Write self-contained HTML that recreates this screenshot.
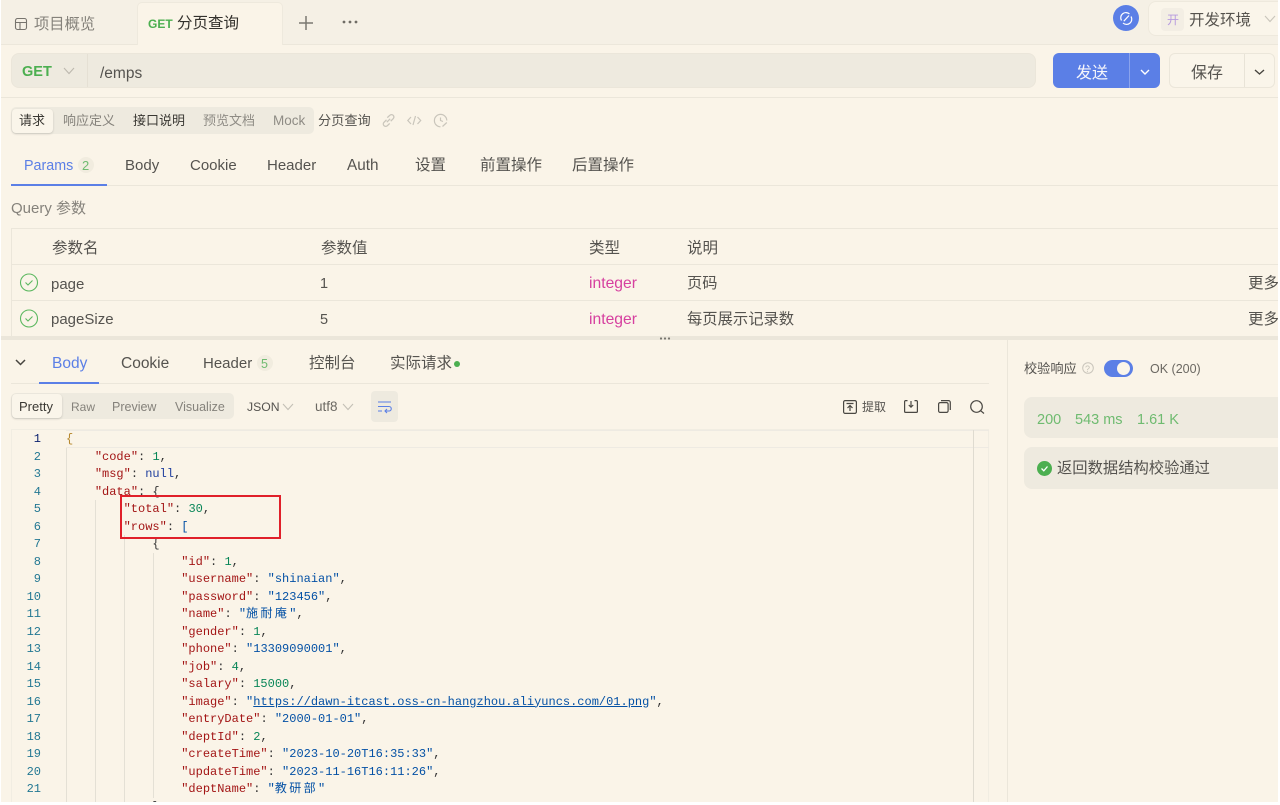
<!DOCTYPE html>
<html lang="zh"><head><meta charset="utf-8"><title>分页查询</title>
<style>
html,body{margin:0;padding:0;width:1280px;height:805px;overflow:hidden;background:#faf4e8}
body{position:relative;font-family:"Liberation Sans","Noto Sans CJK SC",sans-serif;color:#55534f;font-size:14px}
.a{position:absolute}
.t{position:absolute;white-space:nowrap;line-height:20px;height:20px}
.b{position:absolute;background:#ebe6da}
svg{position:absolute;overflow:visible;fill:none}
#code{position:absolute;left:66px;top:431px;font:12px/17.5px "Liberation Mono","Noto Sans CJK SC",monospace;color:#333;white-space:pre;letter-spacing:0}
#nums{position:absolute;left:12px;width:29px;top:431px;font:12px/17.5px "Liberation Mono",monospace;color:#237893;text-align:right;white-space:pre}
.k{color:#a31515}.s{color:#0451a5}.n{color:#098658}.p{color:#333}.c{letter-spacing:2.4px}
</style></head><body>
<!-- tab bar -->
<div class="a" style="left:0;top:0;width:1280px;height:44px;background:#f5f0e5;border-bottom:1px solid #ece7db"></div>
<svg style="left:15px;top:18px" width="13" height="13" stroke="#77746e" stroke-width="1.1"><rect x=".5" y=".5" width="11" height="11" rx="2"/><path d="M.5 4.5H11.5M5 4.5V11.5"/></svg>
<span class="t" style="left:34px;top:15px;font-size:15.3px;color:#85827b">项目概览</span>
<div class="a" style="left:137px;top:2px;width:146px;height:43px;background:#faf4e8;border:1px solid #eee9dd;border-bottom:0;border-radius:5px 5px 0 0;box-sizing:border-box"></div>
<span class="t" style="left:148px;top:14px;font-size:12px;font-weight:700;color:#4caf50">GET</span>
<span class="t" style="left:177px;top:14px;font-size:15.5px;color:#33312d">分页查询</span>
<svg style="left:299px;top:16px" width="15" height="15" stroke="#7b7871" stroke-width="1.5"><path d="M7 0V14M0 7H14"/></svg>
<svg style="left:342px;top:20px" width="16" height="5"><circle cx="2" cy="2" r="1.4" fill="#6f6c65"/><circle cx="8" cy="2" r="1.4" fill="#6f6c65"/><circle cx="14" cy="2" r="1.4" fill="#6f6c65"/></svg>
<div class="a" style="left:1113px;top:5px;width:26px;height:26px;border-radius:50%;background:#5b7fe6"></div>
<svg style="left:1120px;top:12px" width="13" height="13" stroke="#fff" stroke-width="1.2"><path d="M1.500 8.500A5.200 5.200 0 0 1 9.500 2M11 4.500A5.200 5.200 0 0 1 3 11M3.800 9.200L9 3.500"/></svg>
<div class="a" style="left:1148px;top:1px;width:140px;height:35px;border:1px solid #eee9dd;border-radius:8px;background:#faf5ea;box-sizing:border-box"></div>
<div class="a" style="left:1161px;top:8px;width:23px;height:23px;border-radius:4px;background:#f3eee4"></div>
<span class="t" style="left:1167px;top:10px;font-size:12px;color:#b79bdf">开</span>
<span class="t" style="left:1189px;top:11px;font-size:15.5px;color:#56534e">开发环境</span>
<svg style="left:1264px;top:15px" width="12" height="8" stroke="#c9c5bb" stroke-width="1.1"><path d="M1 1L6 6.5L11 1"/></svg>
<!-- url bar -->
<div class="a" style="left:11px;top:53px;width:1025px;height:35px;background:#eeeadf;border-radius:8px;border:1px solid #ebe6da;box-sizing:border-box"></div>
<div class="a" style="left:87px;top:54px;width:1px;height:33px;background:#e5e0d4"></div>
<span class="t" style="left:22px;top:62px;font-size:14.5px;font-weight:700;color:#4caf50">GET</span>
<svg style="left:63px;top:67px" width="12" height="8" stroke="#bdb9af" stroke-width="1.1"><path d="M1 1L6 6.5L11 1"/></svg>
<span class="t" style="left:100px;top:64px;font-size:15.5px;color:#55534f">/emps</span>
<div class="a" style="left:1053px;top:53px;width:107px;height:35px;background:#5b7fe6;border-radius:6px"></div>
<div class="a" style="left:1129px;top:53px;width:1px;height:35px;background:#8aa3ed"></div>
<span class="t" style="left:1076px;top:64px;font-size:16px;color:#f5f6fb">发送</span>
<svg style="left:1140px;top:69px" width="10" height="6" stroke="#fff" stroke-width="1.4"><path d="M1 1L5 5L9 1"/></svg>
<div class="a" style="left:1169px;top:53px;width:106px;height:35px;border:1px solid #ebe6da;border-radius:6px;box-sizing:border-box;background:#faf5ea"></div>
<div class="a" style="left:1244px;top:54px;width:1px;height:33px;background:#e8e3d7"></div>
<span class="t" style="left:1191px;top:64px;font-size:16px;color:#55534f">保存</span>
<svg style="left:1254px;top:69px" width="11" height="6" stroke="#47453f" stroke-width="1.4"><path d="M1 1L5.500 5L10 1"/></svg>
<div class="b" style="left:0;top:97px;width:1280px;height:1px"></div>
<!-- segmented -->
<div class="a" style="left:11px;top:107px;width:303px;height:27px;background:#eeeadf;border-radius:5px"></div>
<div class="a" style="left:12px;top:109px;width:41px;height:24px;background:#faf5ea;border-radius:4px;box-shadow:0 1px 2px rgba(0,0,0,.16)"></div>
<span class="t" style="left:19px;top:111px;font-size:13px;color:#3a3833">请求</span>
<span class="t" style="left:63px;top:111px;font-size:13px;color:#85827b">响应定义</span>
<span class="t" style="left:133px;top:111px;font-size:13px;color:#3a3833">接口说明</span>
<span class="t" style="left:203px;top:111px;font-size:13px;color:#8f8c85">预览文档</span>
<span class="t" style="left:273px;top:111px;font-size:13.5px;color:#8f8c85">Mock</span>
<span class="t" style="left:318px;top:111px;font-size:13.2px;color:#55534f">分页查询</span>
<svg style="left:382px;top:114px" width="13" height="13" stroke="#c9c5bb" stroke-width="1.300"><path d="M4.800 8.200L8.200 4.800M4.500 5.800L2 8.300a2.400 2.400 0 0 0 3.400 3.400L7.700 9.400M5.300 3.600L7.800 1.300a2.400 2.400 0 0 1 3.400 3.400L8.700 7.200"/></svg>
<svg style="left:407px;top:115px" width="15" height="11" stroke="#c9c5bb" stroke-width="1.200"><path d="M4 2L.8 5.500L4 9M10.500 2L13.700 5.500L10.500 9M8.500 1L6 10"/></svg>
<svg style="left:434px;top:114px" width="14" height="14" stroke="#c9c5bb" stroke-width="1.200"><path d="M12.800 6.500A6.200 6.200 0 1 0 6.500 12.800M6.500 3.500V6.500L9 7.500M8.500 12.500L12.800 8.500"/></svg>
<!-- tabs -->
<span class="t" style="left:24px;top:156px;font-size:14.300px;color:#5b7fe6">Params</span>
<div class="a" style="left:78px;top:157px;width:16px;height:16px;border-radius:50%;background:#f1ecdf"></div>
<span class="t" style="left:82px;top:156px;font-size:13px;color:#6fbb70">2</span>
<span class="t" style="left:125px;top:156px;font-size:15px;color:#55534f">Body</span>
<span class="t" style="left:190px;top:156px;font-size:15px;color:#55534f">Cookie</span>
<span class="t" style="left:267px;top:156px;font-size:15px;color:#55534f">Header</span>
<span class="t" style="left:347px;top:156px;font-size:15.3px;color:#55534f">Auth</span>
<span class="t" style="left:415px;top:156px;font-size:15.5px;color:#55534f">设置</span>
<span class="t" style="left:480px;top:156px;font-size:15.5px;color:#55534f">前置操作</span>
<span class="t" style="left:572px;top:156px;font-size:15.5px;color:#55534f">后置操作</span>
<div class="b" style="left:11px;top:185px;width:1269px;height:1px"></div>
<div class="a" style="left:11px;top:184px;width:96px;height:2px;background:#5b7fe6"></div>
<span class="t" style="left:11px;top:199px;font-size:15px;color:#85827b">Query 参数</span>
<!-- table -->
<div class="b" style="left:11px;top:228px;width:1269px;height:1px"></div>
<div class="b" style="left:11px;top:264px;width:1269px;height:1px"></div>
<div class="b" style="left:11px;top:300px;width:1269px;height:1px"></div>
<div class="b" style="left:11px;top:228px;width:1px;height:110px"></div>
<span class="t" style="left:52px;top:239px;font-size:15.5px;color:#55534f">参数名</span>
<span class="t" style="left:321px;top:239px;font-size:15.5px;color:#55534f">参数值</span>
<span class="t" style="left:589px;top:239px;font-size:15.5px;color:#55534f">类型</span>
<span class="t" style="left:687px;top:239px;font-size:15.5px;color:#55534f">说明</span>
<svg style="left:20px;top:274px" width="18" height="18" stroke="#5cb860" stroke-width="1.1"><circle cx="9" cy="8.500" r="8.500"/><path d="M5.500 8.500L8 11L12.500 6.500"/></svg>
<span class="t" style="left:51px;top:275px;font-size:15px">page</span>
<span class="t" style="left:320px;top:274px;font-size:14.500px">1</span>
<span class="t" style="left:589px;top:274px;font-size:15.7px;color:#d6409f">integer</span>
<span class="t" style="left:687px;top:274px;font-size:15.200px">页码</span>
<span class="t" style="left:1248px;top:274px;font-size:15.500px">更多</span>
<svg style="left:20px;top:310px" width="18" height="18" stroke="#5cb860" stroke-width="1.1"><circle cx="9" cy="8.500" r="8.500"/><path d="M5.500 8.500L8 11L12.500 6.500"/></svg>
<span class="t" style="left:51px;top:310px;font-size:15px">pageSize</span>
<span class="t" style="left:320px;top:310px;font-size:14.500px">5</span>
<span class="t" style="left:589px;top:310px;font-size:15.7px;color:#d6409f">integer</span>
<span class="t" style="left:687px;top:310px;font-size:15.300px">每页展示记录数</span>
<span class="t" style="left:1248px;top:310px;font-size:15.500px">更多</span>
<!-- splitter -->
<div class="a" style="left:0;top:336px;width:1280px;height:4px;background:#ebe6da"></div>
<svg style="left:659px;top:336px" width="13" height="5"><circle cx="2" cy="2.500" r="1.100" fill="#77746e"/><circle cx="6" cy="2.500" r="1.100" fill="#77746e"/><circle cx="10" cy="2.500" r="1.100" fill="#77746e"/></svg>
<!-- response tabs -->
<svg style="left:15px;top:359px" width="11" height="7" stroke="#47453f" stroke-width="1.5"><path d="M1 1L5.500 5.500L10 1"/></svg>
<span class="t" style="left:52px;top:354px;font-size:15.500px;color:#5b7fe6">Body</span>
<span class="t" style="left:121px;top:354px;font-size:15.500px">Cookie</span>
<span class="t" style="left:203px;top:354px;font-size:15px">Header</span>
<div class="a" style="left:257px;top:355px;width:16px;height:16px;border-radius:50%;background:#f1ecdf"></div>
<span class="t" style="left:261px;top:354px;font-size:12.500px;color:#6fbb70">5</span>
<span class="t" style="left:309px;top:354px;font-size:15.500px">控制台</span>
<span class="t" style="left:390px;top:354px;font-size:15.500px">实际请求</span>
<div class="a" style="left:454px;top:361px;width:6px;height:6px;border-radius:50%;background:#4caf50"></div>
<div class="b" style="left:11px;top:383px;width:978px;height:1px"></div>
<div class="a" style="left:39px;top:382px;width:60px;height:2px;background:#5b7fe6"></div>
<!-- pretty -->
<div class="a" style="left:11px;top:393px;width:223px;height:26px;background:#eeeadf;border-radius:5px"></div>
<div class="a" style="left:12px;top:394px;width:50px;height:24px;background:#faf5ea;border-radius:4px;box-shadow:0 1px 2px rgba(0,0,0,.16)"></div>
<span class="t" style="left:19px;top:397px;font-size:13px;color:#3a3833">Pretty</span>
<span class="t" style="left:71px;top:397px;font-size:12px;color:#85827b">Raw</span>
<span class="t" style="left:112px;top:397px;font-size:12.500px;color:#85827b">Preview</span>
<span class="t" style="left:175px;top:397px;font-size:12.500px;color:#85827b">Visualize</span>
<span class="t" style="left:247px;top:397px;font-size:12.200px">JSON</span>
<svg style="left:282px;top:403px" width="12" height="8" stroke="#c4c0b6" stroke-width="1.100"><path d="M1 1L6 6.500L11 1"/></svg>
<span class="t" style="left:315px;top:397px;font-size:13.500px;color:#6b6862">utf8</span>
<svg style="left:342px;top:403px" width="12" height="8" stroke="#c4c0b6" stroke-width="1.100"><path d="M1 1L6 6.500L11 1"/></svg>
<div class="a" style="left:371px;top:391px;width:27px;height:31px;background:#eeeadf;border-radius:4px"></div>
<svg style="left:378px;top:401px" width="14" height="12" stroke="#5b7fe6" stroke-width="1.100"><path d="M0 1H13M0 5.500H11a2.200 2.200 0 0 1 0 4.500H7M9 8L7 10L9 12M0 10H4"/></svg>
<svg style="left:843px;top:400px" width="14" height="14" stroke="#4a4843" stroke-width="1.200"><rect x=".6" y=".6" width="12.800" height="12.800" rx="1.500"/><path d="M3.500 3.500H10.500M7 11V5.500M4.500 8L7 5.500L9.500 8"/></svg>
<span class="t" style="left:862px;top:397px;font-size:12px;color:#55534f">提取</span>
<svg style="left:904px;top:400px" width="14" height="13" stroke="#4a4843" stroke-width="1.200"><path d="M3.500 .6H1.600a1 1 0 0 0-1 1V11.400a1 1 0 0 0 1 1H12.400a1 1 0 0 0 1-1V1.600a1 1 0 0 0-1-1H10.500M7 1V7M4.800 5L7 7.200L9.200 5"/></svg>
<svg style="left:938px;top:400px" width="13" height="13" stroke="#4a4843" stroke-width="1.200"><rect x=".6" y="2.600" width="9.500" height="9.800" rx="1.500"/><path d="M3 .6H10.500a1.800 1.800 0 0 1 1.800 1.800V10"/></svg>
<svg style="left:970px;top:400px" width="15" height="14" stroke="#4a4843" stroke-width="1.200"><circle cx="6.500" cy="6.500" r="5.800"/><path d="M10.800 10.800L14 13.500"/></svg>
<!-- right panel -->
<div class="b" style="left:1007px;top:340px;width:1px;height:465px"></div>
<span class="t" style="left:1024px;top:359px;font-size:13.200px">校验响应</span>
<svg style="left:1082px;top:362px" width="12" height="12" stroke="#c9c5bb"><circle cx="6" cy="6" r="5.300"/></svg>
<span class="t" style="left:1085px;top:359px;font-size:9px;color:#c4c0b6">?</span>
<div class="a" style="left:1104px;top:360px;width:29px;height:17px;border-radius:9px;background:#5b7fe6"></div>
<div class="a" style="left:1117px;top:362px;width:13px;height:13px;border-radius:50%;background:#faf5ea"></div>
<span class="t" style="left:1150px;top:359px;font-size:12.500px;color:#6b6862">OK (200)</span>
<div class="a" style="left:1024px;top:397px;width:256px;height:41px;background:#eeeadf;border-radius:8px 0 0 8px"></div>
<span class="t" style="left:1037px;top:410px;font-size:14.500px;color:#6fbb70">200</span>
<span class="t" style="left:1075px;top:410px;font-size:14.500px;color:#6fbb70">543 ms</span>
<span class="t" style="left:1137px;top:410px;font-size:14.500px;color:#6fbb70">1.61 K</span>
<div class="a" style="left:1024px;top:447px;width:256px;height:42px;background:#eeeadf;border-radius:8px 0 0 8px"></div>
<div class="a" style="left:1037px;top:461px;width:15px;height:15px;border-radius:50%;background:#4caf50"></div>
<svg style="left:1037px;top:461px" width="15" height="15" stroke="#fff" stroke-width="1.300"><path d="M4.500 7.500L6.800 9.800L10.500 5.500"/></svg>
<span class="t" style="left:1057px;top:459px;font-size:15.300px;color:#55534f">返回数据结构校验通过</span>
<!-- editor -->
<div class="a" style="left:11px;top:429px;width:978px;height:376px;border:1px solid #f1ede2;border-bottom:0;box-sizing:border-box"></div>
<div class="a" style="left:66px;top:430px;width:923px;height:18px;border-top:1px solid #eeeae2;border-bottom:1px solid #eeeae2;box-sizing:border-box"></div>
<div class="a" style="left:973px;top:430px;width:1px;height:375px;background:#dfdbd0"></div>
<div class="a" style="left:66px;top:448px;width:1px;height:357px;background:#e4e0d5"></div>
<div class="a" style="left:95px;top:500px;width:1px;height:305px;background:#e4e0d5"></div>
<div class="a" style="left:124px;top:535px;width:1px;height:270px;background:#e4e0d5"></div>
<div class="a" style="left:153px;top:553px;width:1px;height:245px;background:#e4e0d5"></div>
<div id="nums"><span style="color:#0b216f">1</span>
2
3
4
5
6
7
8
9
10
11
12
13
14
15
16
17
18
19
20
21
22</div>
<div id="code"><span style="color:#b5862b">{</span>
    <span class="k">"code"</span>: <span class="n">1</span>,
    <span class="k">"msg"</span>: <span style="color:#1f3f9e">null</span>,
    <span class="k">"data"</span>: {
        <span class="k">"total"</span>: <span class="n">30</span>,
        <span class="k">"rows"</span>: <span class="s">[</span>
            {
                <span class="k">"id"</span>: <span class="n">1</span>,
                <span class="k">"username"</span>: <span class="s">"shinaian"</span>,
                <span class="k">"password"</span>: <span class="s">"123456"</span>,
                <span class="k">"name"</span>: <span class="s">"<span class="c">施耐庵</span>"</span>,
                <span class="k">"gender"</span>: <span class="n">1</span>,
                <span class="k">"phone"</span>: <span class="s">"13309090001"</span>,
                <span class="k">"job"</span>: <span class="n">4</span>,
                <span class="k">"salary"</span>: <span class="n">15000</span>,
                <span class="k">"image"</span>: <span class="s">"<u>https://dawn-itcast.oss-cn-hangzhou.aliyuncs.com/01.png</u>"</span>,
                <span class="k">"entryDate"</span>: <span class="s">"2000-01-01"</span>,
                <span class="k">"deptId"</span>: <span class="n">2</span>,
                <span class="k">"createTime"</span>: <span class="s">"2023-10-20T16:35:33"</span>,
                <span class="k">"updateTime"</span>: <span class="s">"2023-11-16T16:11:26"</span>,
                <span class="k">"deptName"</span>: <span class="s">"<span class="c">教研部</span>"</span>
            },</div>
<div class="a" style="left:120px;top:495px;width:161px;height:44px;border:2px solid #e0202a;box-sizing:border-box"></div>
<div class="a" style="left:0;top:802px;width:1280px;height:3px;background:#fff"></div>
<div class="a" style="left:0;top:0;width:1px;height:805px;background:#fff"></div>
<div class="a" style="left:1278px;top:0;width:2px;height:805px;background:#fff"></div>
</body></html>
